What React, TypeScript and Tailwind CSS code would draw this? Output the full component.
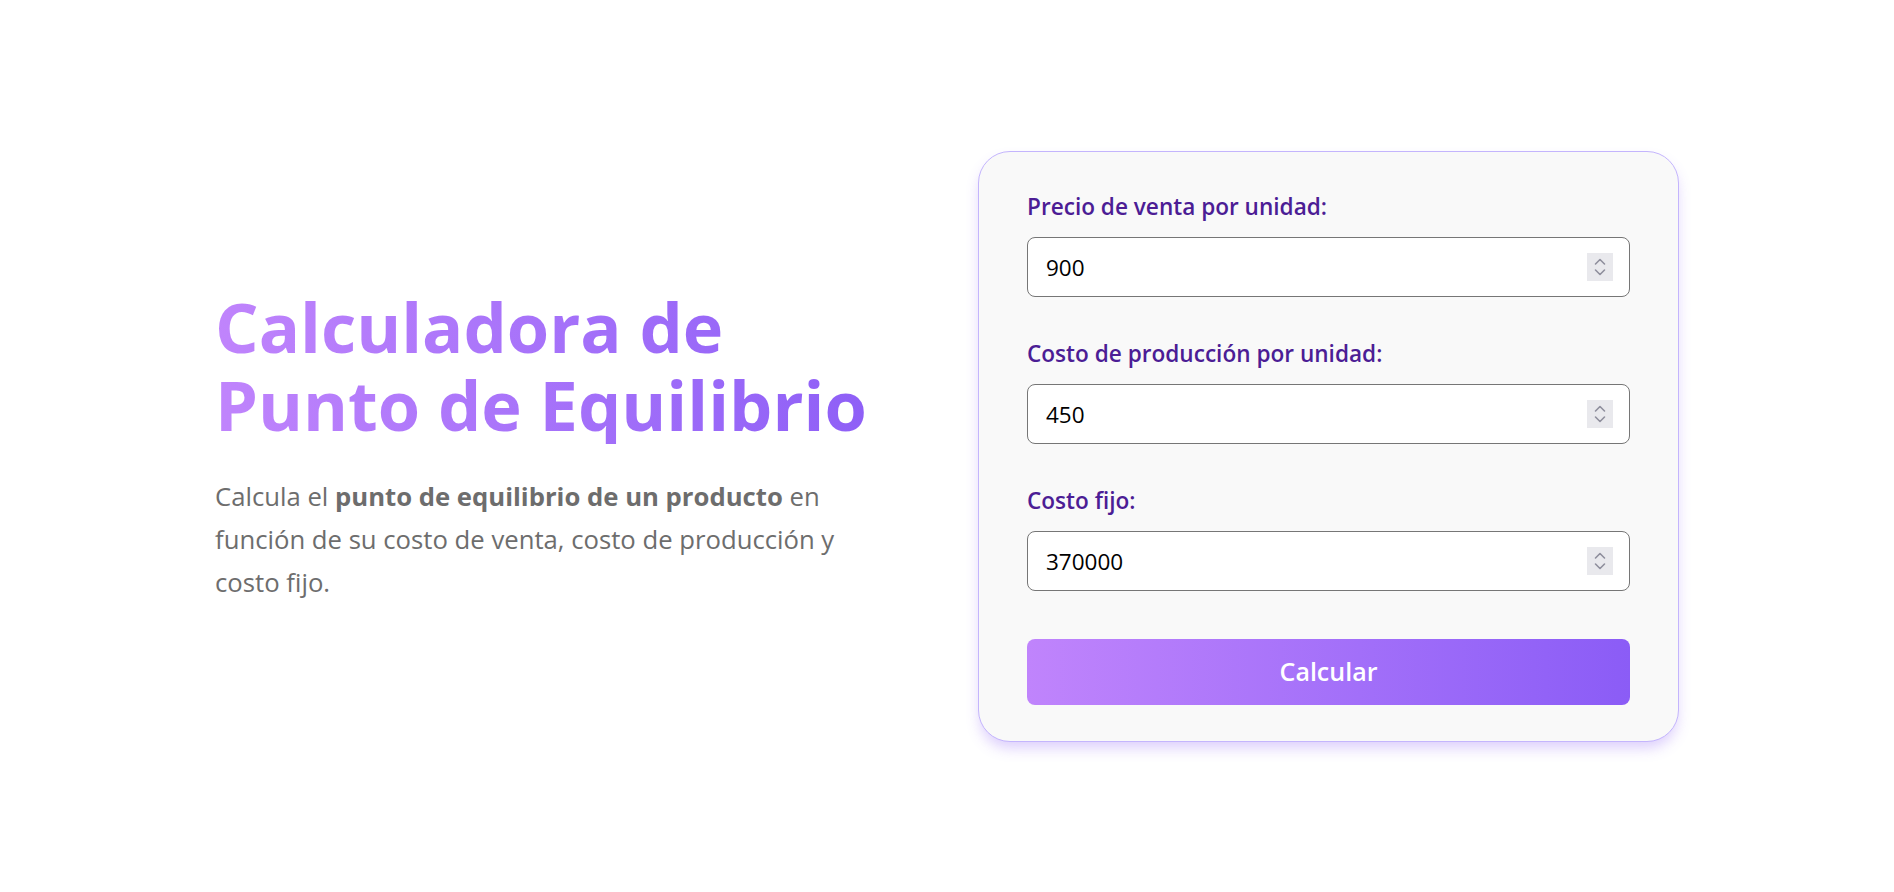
import { useState } from "react";

const fields = [
    { id: "precio", label: "Precio de venta por unidad:", value: "900" },
    { id: "costo", label: "Costo de producción por unidad:", value: "450" },
    { id: "fijo", label: "Costo fijo:", value: "370000" },
];

const Spinner = () => (
    <span className="pointer-events-none absolute right-[17px] top-1/2 flex h-[28px] w-[26px] -translate-y-1/2 items-center justify-center bg-[#e9e9ed]">
        <svg width="12" height="22" viewBox="0 0 12 22" fill="none" stroke="#8f8f9d" strokeWidth="1.6" strokeLinecap="round" strokeLinejoin="round">
            <path d="M1.5 8 L6 3.5 L10.5 8" />
            <path d="M1.5 14 L6 18.5 L10.5 14" />
        </svg>
    </span>
);

const App = () => {
    const [values, setValues] = useState<Record<string, string>>(
        Object.fromEntries(fields.map((f) => [f.id, f.value]))
    );

    return (
        <main className="flex min-h-screen items-center justify-center bg-white font-['Open_Sans','Noto_Sans',sans-serif]">
            <div className="grid w-[1464px] grid-cols-2 items-center gap-[62px]">
                <div>
                    <h1 className="bg-gradient-to-r from-[#c084fc] to-[#8b5cf6] bg-clip-text text-[68.5px] font-bold leading-[78px] text-transparent">
                        Calculadora de
                        <br />
                        Punto de Equilibrio
                    </h1>
                    <p className="mt-[31px] max-w-[660px] text-[25.7px] leading-[43px] text-[#6d6d6d]">
                        Calcula el <strong className="font-bold">punto de equilibrio de un producto</strong> en
                        función de su costo de venta, costo de producción y costo fijo.
                    </p>
                </div>

                <form
                    className="rounded-[32px] border border-[#c4b5fd] bg-[#f9f9f9] px-12 pb-9 pt-10 shadow-[0_8px_14px_-2px_rgba(139,92,246,0.3)]"
                    onSubmit={(e) => e.preventDefault()}
                >
                    <div className="flex flex-col gap-[42px]">
                        {fields.map((field) => (
                            <div key={field.id} className="flex flex-col gap-[15px]">
                                <label htmlFor={field.id} className="text-[22.6px] font-semibold leading-[30px] text-[#4c1d95]">
                                    {field.label}
                                </label>
                                <div className="relative">
                                    <input
                                        id={field.id}
                                        type="text"
                                        inputMode="numeric"
                                        value={values[field.id]}
                                        onChange={(e) => setValues({ ...values, [field.id]: e.target.value })}
                                        className="h-[60px] w-full rounded-lg border border-[#767676] bg-white pl-[18px] pr-14 pt-[2px] text-[22.5px] text-black outline-none"
                                    />
                                    <Spinner />
                                </div>
                            </div>
                        ))}
                    </div>
                    <button
                        type="submit"
                        className="mt-[48px] h-[66px] w-full rounded-lg bg-gradient-to-r from-[#c084fc] to-[#8b5cf6] text-[25px] font-semibold text-white"
                    >
                        Calcular
                    </button>
                </form>
            </div>
        </main>
    );
};

export default App;
